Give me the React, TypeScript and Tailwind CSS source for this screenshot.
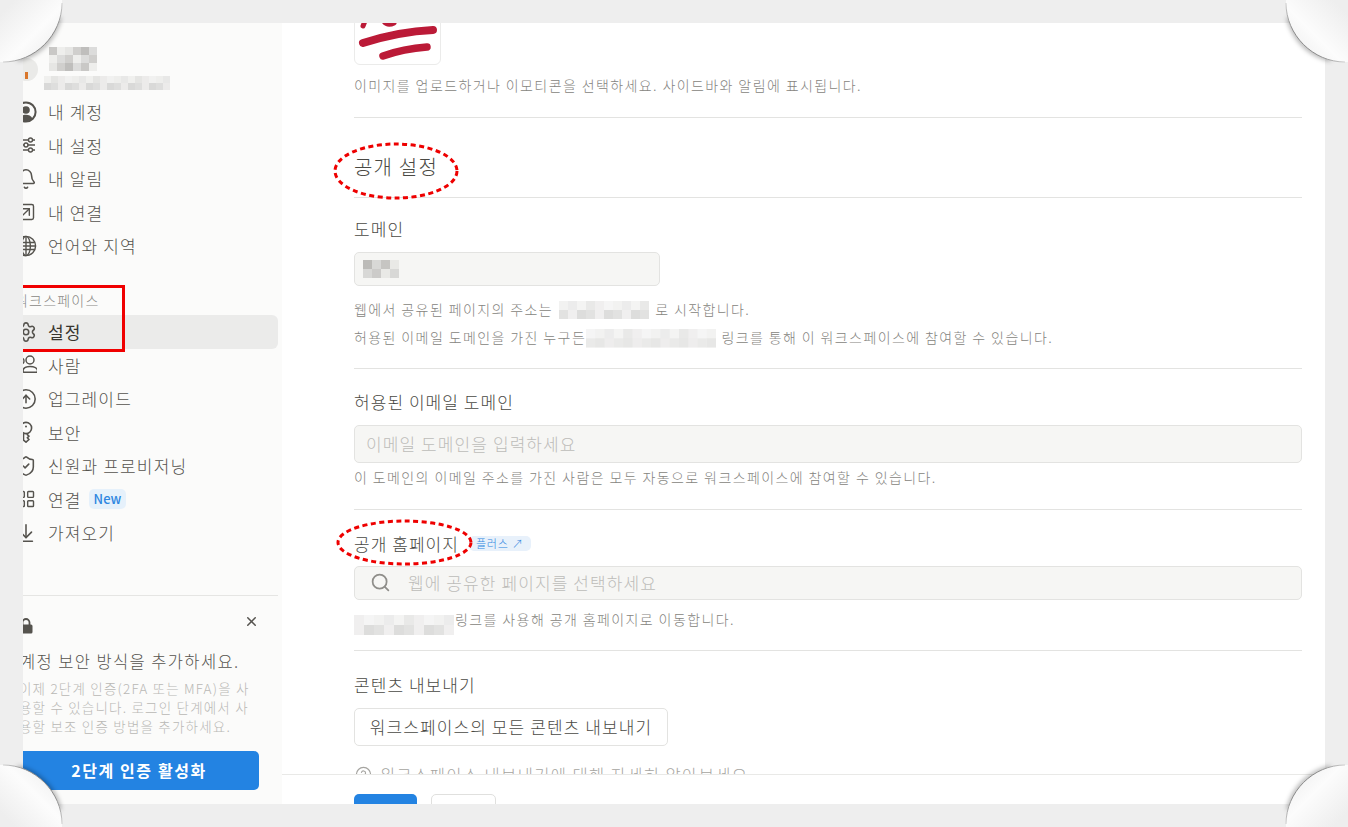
import type { ReactNode } from "react";
import {
  ArrowDownToLine,
  Bell,
  CircleArrowUp,
  CircleHelp,
  LayoutGrid,
  Search,
  Settings,
  ShieldCheck,
  SquareArrowUpRight,
  X,
} from "lucide-react";

// ─── Small drawings ───────────────────────────────────────────────────────────

// Blurred-out text in the screenshot: a grid of grey squares
function Mosaic({ cols, rows, size, seed = 1, strong = false }: { cols: number; rows: number; size: number; seed?: number; strong?: boolean }) {
  const shade = (c: number, r: number) => {
    const n = (c * 7 + r * 13 + seed * 5 + c * r * 3) % 6;
    const pale = [0.09, 0.12, 0.17, 0.1, 0.2, 0.14];
    const dark = [0.12, 0.26, 0.36, 0.18, 0.3, 0.08];
    const v = (strong ? dark : pale)[n];
    return !strong && r === 0 ? v * 0.65 : v;
  };
  return (
    <svg width={cols * size} height={rows * size} className="block shrink-0">
      {Array.from({ length: rows }).flatMap((_, r) =>
        Array.from({ length: cols }).map((_, c) => (
          <rect key={`${r}-${c}`} x={c * size} y={r * size} width={size} height={size} fill="#55534e" opacity={shade(c, r)} />
        )),
      )}
    </svg>
  );
}

function UserCircleIcon() {
  return (
    <svg width="22" height="22" viewBox="0 0 22 22">
      <circle cx="11" cy="11" r="9.6" fill="none" stroke="#55534e" strokeWidth="2" />
      <circle cx="11" cy="9" r="3.8" fill="#55534e" />
      <path d="M4.5 17.5c1.5-2.8 3.8-3.8 6.5-3.8s5 1 6.5 3.8c-1.7 1.8-4 2.8-6.5 2.8s-4.8-1-6.5-2.8z" fill="#55534e" />
    </svg>
  );
}

function SlidersIcon() {
  return (
    <svg width="22" height="22" viewBox="0 0 22 22" fill="none" stroke="#55534e" strokeWidth="1.4">
      <path d="M3 6H20M3 11H20M3 16H20" />
      <circle cx="15.5" cy="6" r="2" fill="#fbfbfa" />
      <circle cx="11" cy="11" r="2" fill="#fbfbfa" />
      <circle cx="15.5" cy="16" r="2" fill="#fbfbfa" />
    </svg>
  );
}

function GlobeIcon() {
  return (
    <svg width="22" height="22" viewBox="0 0 22 22" fill="none" stroke="#55534e" strokeWidth="1.4">
      <circle cx="11" cy="11" r="9.6" />
      <ellipse cx="11" cy="11" rx="4.4" ry="9.6" />
      <path d="M11 1.4V20.6M2.2 7.5H19.8M1.4 11H20.6M2.2 14.5H19.8" />
    </svg>
  );
}

function PeopleIcon() {
  return (
    <svg width="22" height="22" viewBox="0 0 22 22" fill="none" stroke="#55534e" strokeWidth="1.5">
      <circle cx="15" cy="6" r="4" />
      <circle cx="6" cy="7" r="3" />
      <path d="M8 17c0-3 3-4.6 7-4.6s7.600 1.600 7.600 4.600c0 .8-.6 1.200-1.200 1.200H9.200C8.500 18.200 8 17.800 8 17z" />
      <path d="M2 16.500c0-2.300 1.800-3.800 4-4" />
    </svg>
  );
}

function KeyIcon() {
  return (
    <svg width="22" height="22" viewBox="0 0 22 22" fill="none" stroke="#55534e" strokeWidth="1.6" strokeLinejoin="round">
      <circle cx="11" cy="7" r="5.600" />
      <circle cx="11" cy="5.500" r="1" fill="#55534e" stroke="none" />
      <path d="M8.500 12.200V19L11 21.200l3-2.700-1.700-1.700 1.700-1.600-1.700-1.500V12.500" />
    </svg>
  );
}

function LockIcon() {
  return (
    <svg width="16" height="18" viewBox="0 0 16 18" className="mt-[6px]">
      <path d="M4.500 8V5.500a3.500 3.500 0 0 1 7 0V8" fill="none" stroke="#55534e" strokeWidth="1.800" />
      <rect x="1.500" y="7.500" width="13" height="9" rx="1.500" fill="#55534e" />
    </svg>
  );
}

function PeelCorner({ className }: { className: string }) {
  return (
    <svg width="72" height="72" viewBox="0 0 72 72" className={`pointer-events-none absolute ${className}`}>
      <defs>
        <linearGradient id="peel" x1="0" y1="0" x2="1" y2="1">
          <stop offset="0.12" stopColor="#eeeeee" />
          <stop offset="0.55" stopColor="#fcfcfc" />
          <stop offset="0.72" stopColor="#f5f5f5" />
        </linearGradient>
        <linearGradient id="peel-edge" x1="0" y1="0" x2="1" y2="1">
          <stop offset="0.5" stopColor="#d0d0d0" />
          <stop offset="0.68" stopColor="#8a8a8a" />
        </linearGradient>
        <filter id="peel-blur" x="-30%" y="-30%" width="160%" height="160%">
          <feGaussianBlur stdDeviation="2.4" />
        </filter>
      </defs>
      <path d="M58 16C52 38 38 52 16 58" transform="translate(1.5 1.5)" fill="none" stroke="#000" strokeOpacity="0.45" strokeWidth="3" filter="url(#peel-blur)" />
      <path d="M0 0H62V3C62 35 35 62 3 62H0Z" fill="url(#peel)" />
      <path d="M62 3C62 35 35 62 3 62" fill="none" stroke="url(#peel-edge)" strokeWidth="1" />
    </svg>
  );
}

function DashedEllipse({ className, w, h }: { className: string; w: number; h: number }) {
  return (
    <svg width={w} height={h} className={`pointer-events-none absolute ${className}`}>
      <ellipse cx={w / 2} cy={h / 2} rx={w / 2 - 2} ry={h / 2 - 2} fill="none" stroke="#ee0000" strokeWidth="3" strokeDasharray="5 3.5" />
    </svg>
  );
}

// ─── Sidebar ──────────────────────────────────────────────────────────────────

function NavRow({ icon, label, active, badge }: { icon: ReactNode; label: string; active?: boolean; badge?: string }) {
  return (
    <div className={`flex h-[33.5px] items-center gap-[11px] rounded-md pl-[2px] ${active ? "bg-[#ebebea] font-normal text-[#37352f]" : "text-[#55534e]"}`}>
      <span className="flex w-[22px] shrink-0 justify-center text-[#55534e]">{icon}</span>
      <span className="text-[17px] leading-none tracking-[1.15px]">{label}</span>
      {badge ? <span className="-ml-[4px] rounded-[5px] bg-[#e6f1fb] px-[5px] py-[3px] text-[13px] font-medium leading-[14px] text-[#2f86e0]">{badge}</span> : null}
    </div>
  );
}

function Sidebar() {
  const icon = { size: 22, strokeWidth: 1.7 };
  return (
    <aside className="flex w-[259px] shrink-0 flex-col overflow-hidden bg-[#fbfbfa]">
      <div className="-ml-[10px] flex w-[265px] flex-col">
        <div className="flex h-[73px] pt-[24px]">
          <div className="relative mt-[11px] ml-[2px] h-[23px] w-[23px] rounded-full bg-[#eaeae8]">
            <span className="absolute bottom-[2px] left-[10px] h-[7px] w-[3px] bg-[#d9762b]" />
          </div>
          <div className="ml-[6px] flex flex-col">
            <div className="ml-[5px]"><Mosaic cols={6} rows={3} size={8} seed={2} strong /></div>
            <div className="mt-[5px]"><Mosaic cols={18} rows={2} size={7} seed={3} /></div>
          </div>
        </div>
        <div className="-mt-[1px]">
          <NavRow icon={<UserCircleIcon />} label="내 계정" />
          <NavRow icon={<SlidersIcon />} label="내 설정" />
          <NavRow icon={<Bell {...icon} />} label="내 알림" />
          <NavRow icon={<SquareArrowUpRight size={20} strokeWidth={1.7} />} label="내 연결" />
          <NavRow icon={<GlobeIcon />} label="언어와 지역" />
        </div>
        <div className="h-[52.5px] pt-[28px] pl-[2px] text-[14px] leading-[18px] tracking-[1.2px] text-[#8a8985]">워크스페이스</div>
        <NavRow active icon={<Settings {...icon} />} label="설정" />
        <NavRow icon={<PeopleIcon />} label="사람" />
        <NavRow icon={<CircleArrowUp {...icon} />} label="업그레이드" />
        <NavRow icon={<KeyIcon />} label="보안" />
        <NavRow icon={<ShieldCheck {...icon} />} label="신원과 프로비저닝" />
        <NavRow icon={<LayoutGrid size={20} strokeWidth={1.7} />} label="연결" badge="New" />
        <NavRow icon={<ArrowDownToLine {...icon} />} label="가져오기" />
        <div className="mt-[45px] border-t border-[#e5e5e3] pt-[15px]">
          <div className="flex items-start justify-between pr-[19px] pl-[5px] text-[#55534e]">
            <LockIcon />
            <X size={15} strokeWidth={2.4} className="mt-[3px]" />
          </div>
          <div className="mt-[14px] ml-[7px] text-[16.5px] leading-[24px] tracking-[1.4px] whitespace-nowrap text-[#55534e]">계정 보안 방식을 추가하세요.</div>
          <div className="mt-[6px] ml-[6px] w-[250px] text-[13.5px] leading-[19px] tracking-[1.2px] whitespace-nowrap text-[#b9b8b5]">
            <div>이제 2단계 인증(2FA 또는 MFA)을 사</div>
            <div>용할 수 있습니다. 로그인 단계에서 사</div>
            <div>용할 보조 인증 방법을 추가하세요.</div>
          </div>
          <div className="mt-[15px] ml-[6px] flex h-[39px] w-[240px] items-center justify-center rounded-[5px] bg-[#2383e2] text-[16px] font-semibold tracking-[1.6px] text-white">2단계 인증 활성화</div>
        </div>
      </div>
    </aside>
  );
}

// ─── Main panel ───────────────────────────────────────────────────────────────

function Hint({ children, className = "" }: { children: ReactNode; className?: string }) {
  return <div className={`flex items-center text-[14px] leading-[20px] tracking-[1.4px] whitespace-nowrap text-[#858480] ${className}`}>{children}</div>;
}

function Label({ children, className = "" }: { children: ReactNode; className?: string }) {
  return <div className={`text-[17px] leading-[22px] tracking-[1.05px] whitespace-nowrap text-[#4a4944] ${className}`}>{children}</div>;
}

function Rule({ className = "" }: { className?: string }) {
  return <div className={`h-px bg-[#e3e3e1] ${className}`} />;
}

function MainPanel() {
  return (
    <main className="flex min-w-0 flex-1 flex-col bg-white">
      <div className="min-h-0 flex-1 overflow-hidden pr-[23px] pl-[72px]">
        <div className="-mt-[45px] h-[87px] w-[87px] rounded-[6px] border border-[#ebebea]">
          <svg width="85" height="85" viewBox="0 0 85 85" fill="none" stroke="#bb1a37" strokeLinecap="round">
            <path d="M8 64C30 57 55 52 78 51" strokeWidth="8" />
            <path d="M28 77C42 72 58 69 72 68" strokeWidth="7.5" />
            <path d="M10 42L8 47" strokeWidth="5" />
            <path d="M28 41C31 46 35 46 39 44" strokeWidth="5" />
          </svg>
        </div>
        <Hint className="mt-[10px]">이미지를 업로드하거나 이모티콘을 선택하세요. 사이드바와 알림에 표시됩니다.</Hint>
        <Rule className="mt-[22px]" />
        <div className="mt-[35px] text-[20px] leading-[28px] tracking-[1.2px] text-[#4a4944]">공개 설정</div>
        <Rule className="mt-[16px]" />
        <Label className="mt-[20px]">도메인</Label>
        <div className="mt-[12px] flex h-[34px] w-[306px] items-center rounded-[5px] border border-[#e3e3e1] bg-[#f6f6f4] pl-[8px]">
          <Mosaic cols={4} rows={2} size={9} seed={4} strong />
        </div>
        <Hint className="mt-[13px]">
          웹에서 공유된 페이지의 주소는<span className="mt-[2px] ml-[6px]"><Mosaic cols={10} rows={2} size={9} seed={5} /></span><span className="ml-[6px]">로 시작합니다.</span>
        </Hint>
        <Hint className="mt-[8px]">
          허용된 이메일 도메인을 가진 누구든<span className="mt-[2px] mr-[5px]"><Mosaic cols={14} rows={2} size={9.3} seed={6} /></span>링크를 통해 이 워크스페이스에 참여할 수 있습니다.
        </Hint>
        <Rule className="mt-[20px]" />
        <Label className="mt-[22px]">허용된 이메일 도메인</Label>
        <div className="mt-[12px] flex h-[38px] items-center rounded-[5px] border border-[#e3e3e1] bg-[#f6f6f4] pl-[11px] text-[17px] tracking-[1.1px] text-[#bdbcb9]">이메일 도메인을 입력하세요</div>
        <Hint className="mt-[4px]">이 도메인의 이메일 주소를 가진 사람은 모두 자동으로 워크스페이스에 참여할 수 있습니다.</Hint>
        <Rule className="mt-[22px]" />
        <div className="mt-[23px] flex items-center">
          <Label>공개 홈페이지</Label>
          <span className="ml-[10px] flex h-[15px] w-[62px] items-center rounded-[5px] bg-[#e8f1fb] pl-[7px] text-[11px] tracking-[0.8px] text-[#2f86e0]">플러스 ↗</span>
        </div>
        <div className="mt-[11px] flex h-[34px] items-center rounded-[5px] border border-[#e3e3e1] bg-[#f6f6f4] pl-[15px] text-[17px] tracking-[1.1px] text-[#bdbcb9]">
          <Search size={21} strokeWidth={2} className="text-[#8f8e8a]" />
          <span className="ml-[17px]">웹에 공유한 페이지를 선택하세요</span>
        </div>
        <Hint className="mt-[15px] items-start">
          <Mosaic cols={10} rows={2} size={10} seed={7} />
          <span className="-mt-[6px] ml-[1px]">링크를 사용해 공개 홈페이지로 이동합니다.</span>
        </Hint>
        <Rule className="mt-[15px]" />
        <Label className="mt-[23px]">콘텐츠 내보내기</Label>
        <div className="mt-[12px] flex h-[38px] w-[314px] items-center justify-center rounded-[5px] border border-[#e3e3e1] text-[17px] tracking-[1.1px] text-[#4a4944]">워크스페이스의 모든 콘텐츠 내보내기</div>
        <Hint className="mt-[19px] ml-[1px] text-[16.5px] tracking-[1.2px] text-[#a5a4a0]">
          <CircleHelp size={17} strokeWidth={1.6} className="mr-[8px]" />
          워크스페이스 내보내기에 대해 자세히 알아보세요.
        </Hint>
      </div>
      <div className="h-[30px] shrink-0 overflow-hidden border-t border-[#e9e9e7] pt-[19px] pl-[72px]">
        <div className="flex gap-[14px]">
          <div className="h-[36px] w-[63px] rounded-[5px] bg-[#2383e2]" />
          <div className="h-[36px] w-[65px] rounded-[5px] border border-[#e0e0de]" />
        </div>
      </div>
    </main>
  );
}

// ─── Page ─────────────────────────────────────────────────────────────────────

export default function App() {
  return (
    <div className="relative h-[827px] w-[1348px] overflow-hidden bg-[#eeeeee] p-[23px] font-['Noto_Sans_CJK_KR','Noto_Sans',sans-serif] font-light">
      <div className="flex h-full overflow-hidden">
        <Sidebar />
        <MainPanel />
      </div>

      {/* Annotations drawn over the screenshot */}
      <div className="pointer-events-none absolute top-[285px] left-[23px] h-[67px] w-[102px] border-[3px] border-l-0 border-[#f00000]" />
      <DashedEllipse className="top-[142px] left-[333px]" w={126} h={58} />
      <DashedEllipse className="top-[519px] left-[336px]" w={137} h={47} />

      {/* Peeled corners of the screenshot */}
      <PeelCorner className="top-0 left-0" />
      <PeelCorner className="top-0 right-0 -scale-x-100" />
      <PeelCorner className="bottom-0 left-0 -scale-y-100" />
      <PeelCorner className="right-0 bottom-0 -scale-100" />
    </div>
  );
}
